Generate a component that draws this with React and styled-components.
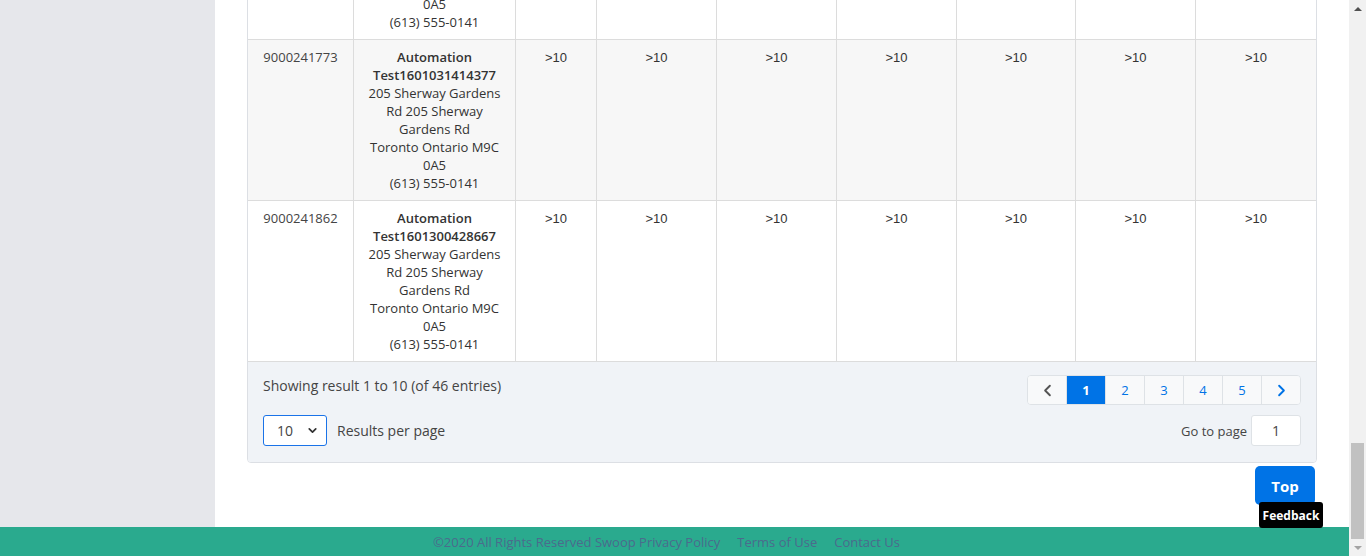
import React, { useLayoutEffect, useRef } from "react";
import styled, { createGlobalStyle } from "styled-components";
import { ChevronLeft, ChevronRight, ChevronDown } from "lucide-react";

const GlobalStyle = createGlobalStyle`
  html, body { margin: 0; padding: 0; height: 100%; overflow: hidden; }
  body { font-family: "Open Sans", "Liberation Sans", sans-serif; color: #333; background: #fff; }
  #root { height: 100%; }
  * { box-sizing: border-box; }
`;

const Window = styled.div`
  display: flex;
  height: 100vh;
`;

const Viewport = styled.div`
  flex: 1;
  min-width: 0;
  height: 100%;
  overflow-y: scroll;
  overflow-x: hidden;
  background: #fff;
  scrollbar-width: none;
  &::-webkit-scrollbar { display: none; }
`;

const ScrollBar = styled.div`
  width: 17px;
  flex: none;
  display: flex;
  flex-direction: column;
  background: #f1f1f1;
`;

const ScrollButton = styled.div`
  height: 17px;
  flex: none;
  display: flex;
  align-items: center;
  justify-content: center;
  &::before {
    content: "";
    width: 0;
    height: 0;
    border-left: 4px solid transparent;
    border-right: 4px solid transparent;
    ${(p) =>
      p.$down
        ? "border-top: 4px solid #a3a3a3;"
        : "border-bottom: 4px solid #505050;"}
  }
`;

const ScrollTrack = styled.div`
  flex: 1;
  display: flex;
  flex-direction: column;
  justify-content: flex-end;
`;

const ScrollThumb = styled.div`
  height: 96px;
  margin: 0 2px;
  background: #c1c1c1;
`;

const Layout = styled.div`
  display: flex;
  align-items: stretch;
`;

const Sidebar = styled.aside`
  width: 215px;
  flex: none;
  background: #e6e7eb;
  padding: 20px 0;
`;

const NavItem = styled.a`
  display: block;
  padding: 10px 20px;
  font-size: 14px;
  color: #444;
  text-decoration: none;
`;

const Main = styled.main`
  flex: 1;
  min-width: 0;
  padding: 24px 32px 22px 32px;
  display: flex;
  flex-direction: column;
`;

const PageTitle = styled.h1`
  margin: 0 0 16px;
  height: 40px;
  font-size: 24px;
  font-weight: 600;
  color: #333;
`;

const FilterCard = styled.section`
  min-height: 1101px;
  margin-bottom: 24px;
  border: 1px solid #dcdfe4;
  border-radius: 4px;
  padding: 16px;
  font-size: 14px;
  color: #444;
`;

const Card = styled.section`
  border: 1px solid #dcdfe4;
  border-radius: 4px;
  overflow: hidden;
  background: #fff;
`;

const Table = styled.table`
  width: 100%;
  border-collapse: separate;
  border-spacing: 0;
  table-layout: fixed;
  font-size: 13px;
  line-height: 18px;
`;

const Th = styled.th`
  height: 45px;
  padding: 8px 6px;
  font-weight: 600;
  text-align: center;
  border-bottom: 1px solid #dcdcdc;
  border-right: 1px solid #dcdcdc;
  &:last-child { border-right: none; }
`;

const Tr = styled.tr`
  background: ${(p) => (p.$striped ? "#f7f7f7" : "#fff")};
`;

const Td = styled.td`
  padding: 8px 4px;
  text-align: center;
  vertical-align: top;
  border-bottom: 1px solid #dcdcdc;
  border-right: 1px solid #dcdcdc;
  color: ${(p) => (p.$muted ? "#444" : "#333")};
  font-family: ${(p) => (p.$qty ? '"Liberation Sans", Arial, sans-serif' : "inherit")};
  line-height: ${(p) => (p.$qty ? "20px" : "18px")};
  &:last-child { border-right: none; }
`;

const Line = styled.span`
  display: block;
  white-space: nowrap;
  font-weight: ${(p) => (p.$bold ? 600 : 400)};
`;

const TableFooter = styled.div`
  background: #f0f3f7;
  padding: 13px 15px 16px;
  display: grid;
  grid-template-columns: 1fr auto;
  row-gap: 10px;
  font-size: 14px;
  color: #444;
`;

const FooterCell = styled.div`
  display: flex;
  align-items: ${(p) => (p.$top ? "flex-start" : "center")};
  height: ${(p) => p.$h}px;
  padding-top: ${(p) => (p.$top ? 1 : 0)}px;
  justify-content: ${(p) => (p.$end ? "flex-end" : "flex-start")};
  gap: ${(p) => p.$gap || 0}px;
  line-height: 20px;
`;

const GoLabel = styled.span`
  font-size: 13px;
`;

const Pager = styled.nav`
  display: flex;
  height: 30px;
  border: 1px solid #dee2e6;
  border-radius: 4px;
  overflow: hidden;
  background: #f8f9fa;
`;

const PageBtn = styled.button`
  width: 39px;
  height: 100%;
  padding: 0;
  border: none;
  border-left: 1px solid #dee2e6;
  &:first-child { border-left: none; width: 38px; }
  background: ${(p) => (p.$active ? "#0073e6" : "#f8f9fa")};
  color: ${(p) => (p.$active ? "#fff" : p.$grey ? "#555" : "#0073e6")};
  font-family: "Open Sans", sans-serif;
  font-size: 13px;
  font-weight: ${(p) => (p.$active ? 700 : 400)};
  display: flex;
  align-items: center;
  justify-content: center;
  cursor: pointer;
`;

const SelectWrap = styled.div`
  position: relative;
  width: 64px;
  height: 31px;
`;

const Select = styled.select`
  appearance: none;
  width: 100%;
  height: 100%;
  border: 1px solid #1a73e8;
  border-radius: 3px;
  padding: 0 0 0 13px;
  background: #fff;
  font-family: "Open Sans", sans-serif;
  font-size: 14px;
  color: #444;
  outline: none;
`;

const SelectArrow = styled.span`
  position: absolute;
  right: 8px;
  top: 9px;
  display: flex;
  color: #333;
  pointer-events: none;
`;

const PageInput = styled.input`
  width: 50px;
  height: 31px;
  border: 1px solid #dee2e6;
  border-radius: 3px;
  text-align: center;
  font-family: "Open Sans", sans-serif;
  font-size: 14px;
  color: #444;
  background: #fff;
  outline: none;
`;

const TopRow = styled.div`
  display: flex;
  justify-content: flex-end;
  margin-top: 3px;
  padding-right: 2px;
`;

const TopButton = styled.button`
  width: 60px;
  height: 39px;
  border: none;
  border-radius: 5px;
  background: #0073e6;
  color: #fff;
  font-family: "Open Sans", sans-serif;
  font-size: 15px;
  font-weight: 700;
  cursor: pointer;
`;

const Feedback = styled.button`
  position: fixed;
  right: 43px;
  bottom: 28px;
  width: 64px;
  height: 26px;
  border: none;
  border-radius: 3px;
  background: #000;
  color: #fff;
  font-family: "Open Sans", sans-serif;
  font-size: 12px;
  font-weight: 700;
  padding: 0;
  z-index: 10;
`;

const SiteFooter = styled.footer`
  height: 29px;
  background: #2aaa8e;
  display: flex;
  align-items: center;
  justify-content: center;
  gap: 17px;
  font-size: 13px;
  color: #4b6b8d;
  padding-right: 16px;
`;

const FooterLink = styled.a`
  color: inherit;
  text-decoration: none;
`;

const colWidths = [106, 162, 81, 120, 120, 120, 119, 120, 120];

const ids = [
  "9000240011", "9000240125", "9000240387", "9000240562", "9000240814",
  "9000241029", "9000241311", "9000241540", "9000241773", "9000241862",
];
const names = [
  "Test1600163204511", "Test1600245118273", "Test1600419932146", "Test1600527744810",
  "Test1600681129054", "Test1600775309128", "Test1600860712235", "Test1600944813509",
  "Test1601031414377", "Test1601300428667",
];

const rows = ids.map((id, i) => ({ id, name: names[i] }));
const address = [
  "205 Sherway Gardens",
  "Rd 205 Sherway",
  "Gardens Rd",
  "Toronto Ontario M9C",
  "0A5",
  "(613) 555-0141",
];

export default function App() {
  const ref = useRef(null);
  useLayoutEffect(() => {
    if (ref.current) ref.current.scrollTop = ref.current.scrollHeight;
  }, []);

  return (
    <>
      <GlobalStyle />
      <Window>
        <Viewport ref={ref}>
          <Layout>
            <Sidebar>
              <NavItem href="#">Dashboard</NavItem>
              <NavItem href="#">Stores</NavItem>
              <NavItem href="#">Inventory</NavItem>
              <NavItem href="#">Reports</NavItem>
            </Sidebar>
            <Main>
              <PageTitle>Inventory Report</PageTitle>
              <FilterCard>Filters</FilterCard>
              <Card>
                <Table>
                  <colgroup>
                    {colWidths.map((w, i) => (
                      <col key={i} style={{ width: w }} />
                    ))}
                  </colgroup>
                  <thead>
                    <tr>
                      <Th>Store #</Th>
                      <Th>Store</Th>
                      <Th>SKU 1</Th>
                      <Th>SKU 2</Th>
                      <Th>SKU 3</Th>
                      <Th>SKU 4</Th>
                      <Th>SKU 5</Th>
                      <Th>SKU 6</Th>
                      <Th>SKU 7</Th>
                    </tr>
                  </thead>
                  <tbody>
                    {rows.map((r, i) => (
                      <Tr key={r.id} $striped={i % 2 === 0}>
                        <Td $muted>{r.id}</Td>
                        <Td>
                          <Line $bold>Automation</Line>
                          <Line $bold>{r.name}</Line>
                          {address.map((a) => (
                            <Line key={a}>{a}</Line>
                          ))}
                        </Td>
                        {Array.from({ length: 7 }).map((_, k) => (
                          <Td key={k} $qty>&gt;10</Td>
                        ))}
                      </Tr>
                    ))}
                  </tbody>
                </Table>
                <TableFooter>
                  <FooterCell $h={30} $top>Showing result 1 to 10 (of 46 entries)</FooterCell>
                  <FooterCell $h={30} $end>
                    <Pager>
                      <PageBtn $grey aria-label="Previous">
                        <ChevronLeft size={19} strokeWidth={2.4} />
                      </PageBtn>
                      <PageBtn $active>1</PageBtn>
                      <PageBtn>2</PageBtn>
                      <PageBtn>3</PageBtn>
                      <PageBtn>4</PageBtn>
                      <PageBtn>5</PageBtn>
                      <PageBtn aria-label="Next">
                        <ChevronRight size={19} strokeWidth={2.4} />
                      </PageBtn>
                    </Pager>
                  </FooterCell>
                  <FooterCell $h={31} $gap={10}>
                    <SelectWrap>
                      <Select defaultValue="10">
                        <option value="10">10</option>
                        <option value="25">25</option>
                        <option value="50">50</option>
                      </Select>
                      <SelectArrow>
                        <ChevronDown size={13} strokeWidth={3.2} />
                      </SelectArrow>
                    </SelectWrap>
                    <span>Results per page</span>
                  </FooterCell>
                  <FooterCell $h={31} $end $gap={4}>
                    <GoLabel>Go to page</GoLabel>
                    <PageInput defaultValue="1" />
                  </FooterCell>
                </TableFooter>
              </Card>
              <TopRow>
                <TopButton>Top</TopButton>
              </TopRow>
            </Main>
          </Layout>
          <SiteFooter>
            <span>©2020 All Rights Reserved Swoop Privacy Policy</span>
            <FooterLink href="#">Terms of Use</FooterLink>
            <FooterLink href="#">Contact Us</FooterLink>
          </SiteFooter>
        </Viewport>
        <ScrollBar aria-hidden="true">
          <ScrollButton />
          <ScrollTrack>
            <ScrollThumb />
          </ScrollTrack>
          <ScrollButton $down />
        </ScrollBar>
      </Window>
      <Feedback>Feedback</Feedback>
    </>
  );
}
